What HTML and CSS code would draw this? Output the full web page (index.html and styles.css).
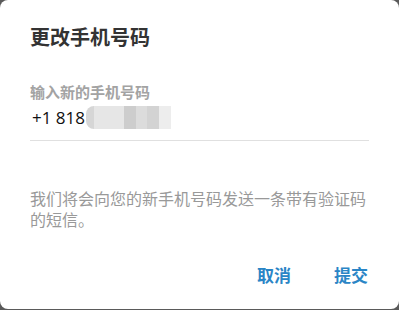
FILE: index.html
```html
<!DOCTYPE html>
<html lang="zh-CN">
<head>
<meta charset="utf-8">
<title>更改手机号码</title>
<link rel="stylesheet" href="styles.css">
</head>
<body>
<div class="dialog">
  <h1 class="title">更改手机号码</h1>
  <div class="field">
    <label class="label">输入新的手机号码</label>
    <div class="input">
      <span class="phone">+1 818</span>
      <span class="mask">
        <span class="blk b1"></span><span class="blk b2"></span><span class="blk b3"></span><span class="blk b4"></span><span class="blk b5"></span><span class="blk b6"></span>
      </span>
    </div>
  </div>
  <p class="desc">我们将会向您的新手机号码发送一条带有验证码的短信。</p>
  <div class="actions">
    <button class="btn">取消</button>
    <button class="btn">提交</button>
  </div>
</div>
</body>
</html>
```

FILE: styles.css
```css
html, body {
  margin: 0;
  padding: 0;
  background: #5a5a5a;
  width: 399px;
  height: 310px;
  overflow: hidden;
}
.dialog {
  box-sizing: border-box;
  width: 399px;
  height: 309px;
  background: #ffffff;
  border-radius: 8px;
  padding: 23px 30px 0 30px;
  font-family: "Noto Sans CJK SC", "Noto Sans", sans-serif;
  display: flex;
  flex-direction: column;
}
.title {
  margin: 0;
  font-size: 20px;
  line-height: 28px;
  font-weight: 700;
  color: #333333;
}
.field {
  margin-top: 31px;
  display: flex;
  flex-direction: column;
}
.label {
  font-size: 15px;
  line-height: 20px;
  font-weight: 700;
  color: #a3a3a3;
}
.input {
  margin-top: 4px;
  display: flex;
  align-items: stretch;
  height: 24px;
  padding-bottom: 10px;
  border-bottom: 1px solid #e0e0e0;
}
.phone {
  font-family: "Open Sans", "Noto Sans", sans-serif;
  font-size: 17px;
  line-height: 24px;
  color: #111111;
  padding-left: 2px;
}
.mask {
  display: flex;
  height: 23px;
  margin-left: 1px;
  filter: blur(0.6px);
}
.blk { display: block; height: 100%; }
.b1 { width: 8px; background: #d6d6d6; border-radius: 8px 0 0 8px; }
.b2 { width: 30px; background: #e6e6e6; }
.b3 { width: 12px; background: #cdcdcd; }
.b4 { width: 11px; background: #dcdcdc; }
.b5 { width: 12px; background: #d3d3d3; }
.b6 { width: 12px; background: #ededed; }
.desc {
  margin: 47px 0 0 0;
  font-size: 16px;
  line-height: 21px;
  color: #999999;
  width: 340px;
}
.actions {
  margin-top: 34px;
  display: flex;
  justify-content: flex-end;
  gap: 43px;
  padding-right: 1px;
}
.btn {
  border: none;
  background: none;
  padding: 0;
  font-family: "Noto Sans CJK SC", sans-serif;
  font-size: 17px;
  line-height: 22px;
  font-weight: 700;
  color: #2a85c6;
  cursor: pointer;
}
```
